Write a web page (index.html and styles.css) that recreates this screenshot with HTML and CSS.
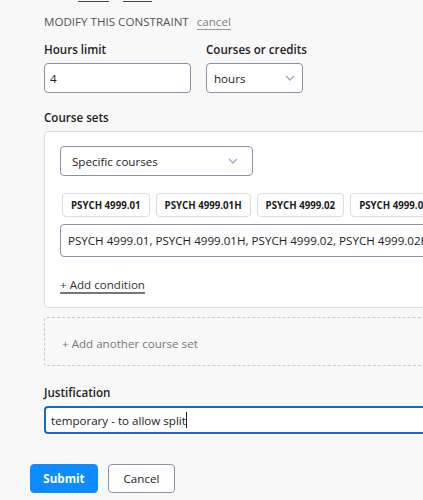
FILE: index.html
```html
<!DOCTYPE html>
<html>
<head>
<meta charset="utf-8">
<link rel="stylesheet" href="styles.css">
</head>
<body>
<div class="page">
  <div class="form">
    <div class="prev"><span class="ul ul1"></span><span class="comma">,</span><span class="ul ul2"></span></div>
    <div class="modify">MODIFY THIS CONSTRAINT <a class="cancel-link" href="#">cancel</a></div>

    <div class="row">
      <div class="field">
        <div class="label">Hours limit</div>
        <div class="input hours-input">4</div>
      </div>
      <div class="field">
        <div class="label">Courses or credits</div>
        <div class="select unit-select">hours
          <svg class="chev" width="10" height="6" viewBox="0 0 10 6"><path d="M1 1l4 4 4-4" fill="none" stroke="#a3a6b4" stroke-width="1.3"/></svg>
        </div>
      </div>
    </div>

    <div class="field sets">
      <div class="label">Course sets</div>
      <div class="card">
        <div class="select type-select">Specific courses
          <svg class="chev" width="10" height="6" viewBox="0 0 10 6"><path d="M1 1l4 4 4-4" fill="none" stroke="#a3a6b4" stroke-width="1.3"/></svg>
        </div>
        <div class="chips">
          <span class="chip">PSYCH 4999.01</span>
          <span class="chip">PSYCH 4999.01H</span>
          <span class="chip">PSYCH 4999.02</span>
          <span class="chip">PSYCH 4999.02H</span>
        </div>
        <div class="input courses-input">PSYCH 4999.01, PSYCH 4999.01H, PSYCH 4999.02, PSYCH 4999.02H</div>
        <a class="add-condition" href="#">+ Add condition</a>
      </div>
    </div>

    <div class="dashed">+ Add another course set</div>

    <div class="field just">
      <div class="label">Justification</div>
      <div class="input focus-input">temporary - to allow split<span class="caret"></span></div>
    </div>
  </div>

  <div class="actions">
    <button class="btn primary">Submit</button>
    <button class="btn secondary">Cancel</button>
  </div>
</div>
</body>
</html>
```

FILE: styles.css
```css
html, body {
  margin: 0;
  padding: 0;
  overflow: hidden;
  background: #f8f8f8;
}
body {
  font-family: "Open Sans", "Noto Sans", sans-serif;
  font-size: 11.6px;
  color: #222;
}
.page {
  padding-left: 30px;
  width: 700px;
}
.form {
  padding-left: 14px;
}
.prev {
  height: 4px;
  display: flex;
  align-items: flex-start;
  padding-left: 34px;
  overflow: hidden;
}
.ul {
  display: block;
  height: 1px;
  margin-top: 1px;
  background: #444;
}
.ul1 { width: 31px; }
.ul2 { width: 29px; }
.comma {
  font-size: 10px;
  line-height: 4px;
  width: 14px;
  text-align: center;
  color: #444;
}
.modify {
  margin-top: 8px;
  padding-top: 2px;
  line-height: 16px;
  color: #555;
}
.cancel-link {
  color: #808080;
  margin-left: 5px;
  text-decoration: underline;
  text-decoration-color: #999;
  text-underline-offset: 3px;
}
.row {
  display: flex;
  gap: 15px;
  margin-top: 10px;
}
.label {
  font-weight: 600;
  padding-top: 2px;
  line-height: 16px;
  color: #222;
  margin-bottom: 5px;
}
.input {
  box-sizing: border-box;
  background: #fff;
  border: 1px solid #8d90a6;
  border-radius: 4px;
  display: flex;
  align-items: center;
  white-space: nowrap;
  color: #222;
}
.hours-input {
  width: 147px;
  height: 30px;
  padding-left: 5px;
}
.select {
  box-sizing: border-box;
  background: #fff;
  border: 1px solid #8d90a6;
  border-radius: 4px;
  display: flex;
  align-items: center;
  justify-content: space-between;
  height: 30px;
  color: #222;
}
.unit-select {
  width: 97px;
  padding: 0 7px 0 7px;
}
.type-select {
  width: 193px;
  padding: 0 14px 0 11px;
}
.chev { display: block; }
.sets {
  margin-top: 15px;
}
.card {
  box-sizing: border-box;
  width: 600px;
  background: #fff;
  border: 1px solid #dcdde2;
  border-radius: 4px;
  padding: 14px 15px 13px;
}
.chips {
  display: flex;
  gap: 6px;
  margin-top: 17px;
  padding-left: 2px;
  white-space: nowrap;
}
.chip {
  box-sizing: border-box;
  height: 24px;
  display: flex;
  align-items: center;
  padding: 0 8px;
  border: 1px solid #dcdde2;
  border-radius: 4px;
  font-size: 9.7px;
  font-weight: 700;
  color: #1a1a1a;
  background: #fff;
}
.courses-input {
  margin-top: 7px;
  height: 33px;
  padding-left: 7px;
}
.add-condition {
  display: inline-block;
  margin-top: 19px;
  line-height: 18px;
  color: #333;
  text-decoration: underline;
  text-decoration-color: #777;
  text-decoration-thickness: 2px;
  text-underline-offset: 3px;
}
.dashed {
  box-sizing: border-box;
  margin-top: 9px;
  width: 600px;
  height: 49px;
  border: 1px dashed #c8c9ce;
  border-radius: 3px;
  padding: 17px 0 0 17px;
  line-height: 18px;
  color: #777;
}
.just {
  margin-top: 17px;
}
.focus-input {
  width: 600px;
  height: 28px;
  border: 2px solid #1a6bbf;
  padding-left: 5px;
}
.caret {
  display: inline-block;
  width: 1px;
  height: 16px;
  background: #222;
}
.actions {
  display: flex;
  gap: 10px;
  margin-top: 30px;
}
.btn {
  box-sizing: border-box;
  height: 29px;
  border-radius: 4px;
  font-family: "Open Sans", "Noto Sans", sans-serif;
  font-size: 11.6px;
  padding: 0;
  cursor: pointer;
}
.primary {
  width: 68px;
  background: #0d8bff;
  border: 1px solid #0d8bff;
  color: #fff;
  font-weight: 700;
}
.secondary {
  width: 67px;
  background: #fff;
  border: 1px solid #8d90a6;
  color: #222;
}
```
